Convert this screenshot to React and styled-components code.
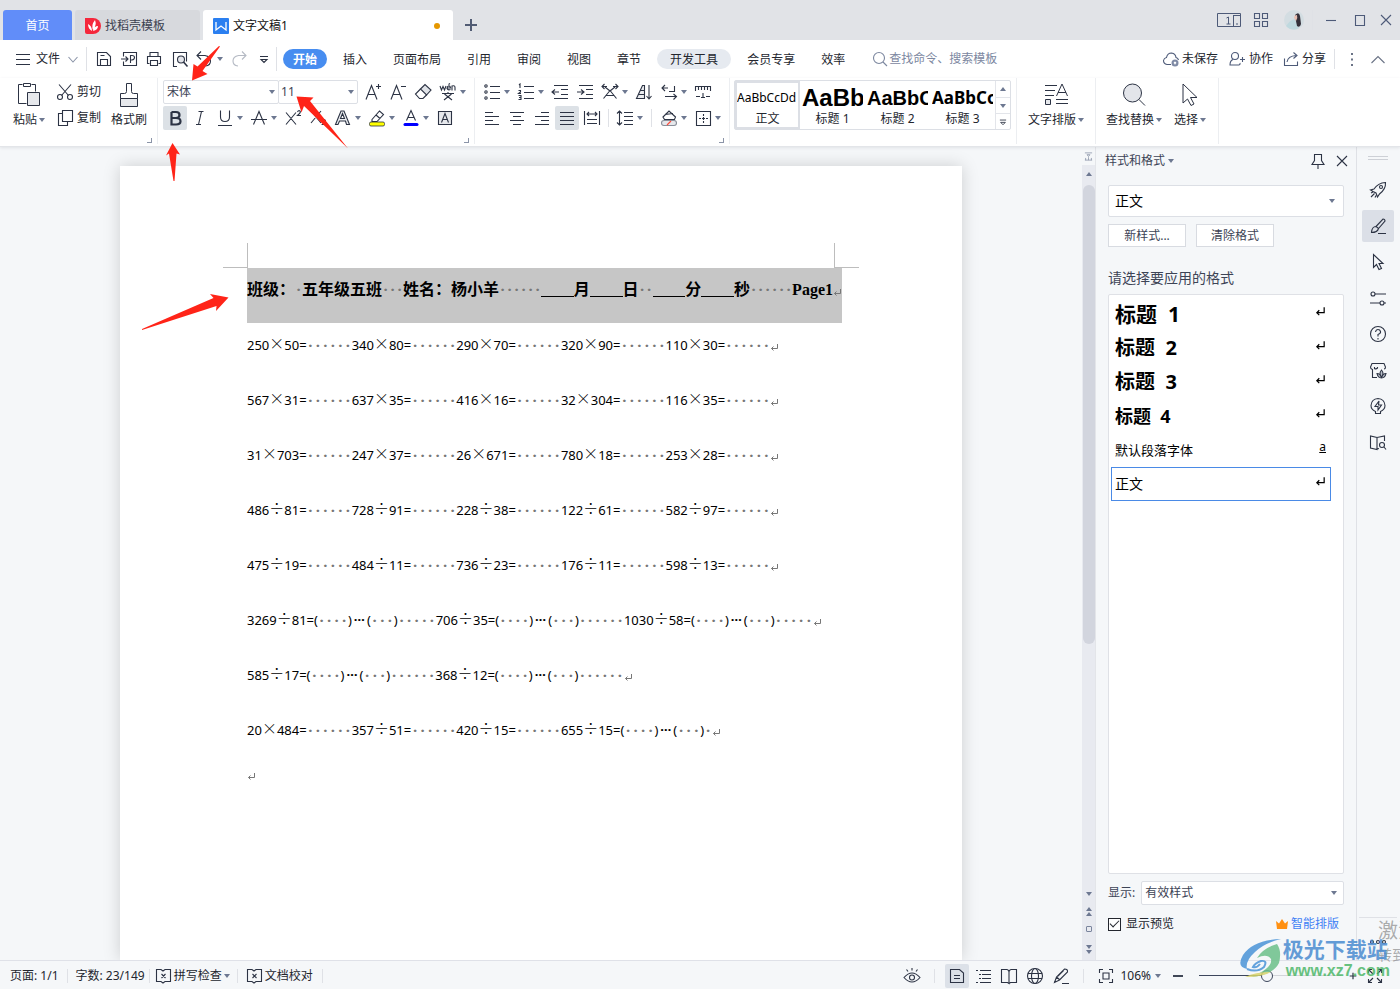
import { useState } from "react";
import styled, { createGlobalStyle } from "styled-components";

const GlobalStyle = createGlobalStyle`
  * {
    box-sizing: border-box;
  }
  body {
    margin: 0;
    font-family: "Noto Sans", "Noto Sans CJK SC", sans-serif;
    font-size: 12px;
    line-height: 16px;
    color: #23262e;
    overflow: hidden;
  }
  button,
  input,
  select {
    font: inherit;
    color: inherit;
    margin: 0;
    padding: 0;
    border: none;
    background: none;
    outline: none;
  }
  h2, h5, p {
    margin: 0;
    font-size: inherit;
    font-weight: inherit;
  }
`;

/* ---------- icons ---------- */

const glyphs = {
  plus: <path d="M9 3v12M3 9h12" strokeWidth="2" />,
  zoomIn: <path d="M9 4v10M4 9h10" strokeWidth="1.8" />,
  zoomOut: <path d="M4 9h10" strokeWidth="1.8" />,
  windowMin: <path d="M4 9.5h10" />,
  windowMax: <path d="M4.5 4.5h9v10h-9z" />,
  close: <path d="M4 4l10 10M14 4L4 14" />,
  grid: <path d="M2.5 2.5h5v5h-5zM10.5 2.5h5v5h-5zM2.5 10.5h5v5h-5zM10.5 10.5h5v5h-5z" />,
  menu: <path d="M2 4.5h14M2 9.5h14M2 14.5h14" />,
  chevronDown: <path d="M4.5 7l4.5 5 4.5-5" />,
  chevronUp: <path d="M2.5 13L9 6.5l6.5 6.5" />,
  save: <path d="M2.5 2.5h9l4 4v9h-13zM5.5 15.5v-6h7v6M5.5 5.5h4" />,
  exportFile: (
    <path d="M3.5 6.5v-4h13v13h-13v-4M1 9h7M5.5 6.5L8 9l-2.5 2.5M10.5 13V5.500h1.5q2.500 0 2.500 2t-2.500 2.500h-1.500" />
  ),
  print: <path d="M5 6.5v-4h8v4M4.500 13.500h-2v-7h13v7h-2M5.500 10.500h7v5h-7z" />,
  preview: (
    <>
      <path d="M6 16.500H2.500v-14h13v9" />
      <circle cx="10" cy="9.500" r="3.500" fill="#e3e5ea" />
      <path d="M12.500 12l4 4.500" strokeWidth="1.600" />
    </>
  ),
  undo: <path d="M7 1.500L3 5.500l4 4M3 5.500h8q5.500 1 5.500 5.500t-5 5" />,
  redo: <path d="M12 1.500l4 4-4 4M16 5.500H8.500Q3 6.500 3 11t5 5" />,
  more: <path d="M5 6.500h8M6 9.500h6l-3 3z" />,
  search: (
    <>
      <circle cx="8" cy="8" r="5.500" />
      <path d="M12 12l4 4" />
    </>
  ),
  cloud: (
    <>
      <path d="M9 14.500H5Q1.500 14 1.500 10.500 2 8 4.500 7.500 5.500 3 9.500 3q4 .5 4.500 4.500 2 .5 2.500 2.500" />
      <circle cx="13" cy="13" r="3.500" fill="#7f8aa5" stroke="none" />
      <path d="M12 12l2 2m0-2l-2 2" stroke="#fff" />
    </>
  ),
  collab: (
    <>
      <circle cx="7" cy="6" r="3.500" />
      <path d="M5 9.500q-3 1-3 5.500h9q1.500-.5 1-2M12 9.500h5M14.500 7v5" />
    </>
  ),
  share: <path d="M2.500 8.500v7h13v-4M5 12q1-6 9-6.500M11.500 2.500l3.500 3-3.500 3" />,
  dotsV: <path d="M9 4h0M9 9.500h0M9 15h0" strokeWidth="2" strokeLinecap="square" />,
  dotsH: (
    <>
      <circle cx="3" cy="9" r="1.500" />
      <circle cx="9" cy="9" r="1.500" />
      <circle cx="15" cy="9" r="1.500" />
    </>
  ),
  cut: (
    <>
      <path d="M3 1.500l9.500 11M15 1.500l-9.500 11" />
      <circle cx="4" cy="14" r="2.500" />
      <circle cx="14" cy="14" r="2.500" />
    </>
  ),
  copy: <path d="M6.500 1.500h10v11h-10zM6.500 4.500h-4v12h9v-4" />,
  growFont: <path d="M2 16.500L7.500 2.500l5.500 14M4 11.500h7M12 3.500h5M14.500 1v5" />,
  shrinkFont: <path d="M2 16.500L7.500 2.500l5.500 14M4 11.500h7M12 3.500h5" />,
  eraser: (
    <>
      <path d="M6.500 6L11 1.500l6 5.500-4.500 5z" fill="#e0e3e8" />
      <path d="M6.500 6L1.500 11l4 4.500h3.500l4-4" />
    </>
  ),
  pinyin: (
    <>
      <path d="M1 3l1.500 4L4 3.500 5.500 7 7 3M8 5h3.500Q11 2.500 9.500 3 8 3.500 8 5.500q1 2 3.500 1M9.500 1.500l1.500-1M13 7.500V3q3-1 3 1.500v3" />
      <path d="M3 10.500h12M9 9v1.500M5.500 11l7.500 6M12.500 11L5 17" />
    </>
  ),
  bold: (
    <path
      d="M5.500 3h4.500q3.500 0 3.500 3T10 9H5.500M5.500 9H10q4.500 0 4.500 3.200T10 15.500H5.500V3"
      strokeWidth="2.200"
    />
  ),
  italic: <path d="M7.500 2.500h5M5 15.500h5M10.500 2.500L7.500 15.500" />,
  underline: <path d="M4.500 1.500V8q0 4.500 4.500 4.500T13.500 8V1.500M2 16.500h14" />,
  strike: <path d="M3.500 15.500L9 2.500l5.500 13M1 10.500h16" />,
  superscript: <path d="M2 3.500l10 12M12 3.500L2 15.500M13.500 3q1-2 2.500-1t-2.500 4.500H17" />,
  subscript: <path d="M2 2l10 12M12 2L2 14M13.500 12q1-2 2.500-1t-2.500 4.500H17" />,
  outlineA: (
    <path d="M1.500 15.500L7 2h3l5.500 13.500h-3L11.500 12H5.500l-1.500 3.500zM6.500 9.500h4L8.500 4.500z" fill="#eceef1" />
  ),
  highlight: (
    <>
      <path d="M4 10.500l7.500-8.500 4 3.500-6.500 7H4zM8 6l4 3.500" />
      <rect x="1.500" y="13" width="15" height="4" rx="1.500" fill="#ffff00" strokeWidth=".8" />
    </>
  ),
  fontColor: (
    <>
      <path d="M4.500 11.500L9 1.500l4.500 10M6 8.500h6" />
      <path d="M3 15.500h12" stroke="#0000ff" strokeWidth="3" strokeLinecap="round" />
    </>
  ),
  shadeA: (
    <>
      <path d="M2.500 2.500h13v13h-13z" fill="#e6e8ec" />
      <path d="M5.500 13.500L9 4.500l3.500 9M6.500 10.500h5" />
    </>
  ),
  bullets: (
    <>
      <circle cx="3" cy="3" r="1.200" />
      <circle cx="3" cy="9" r="1.200" />
      <circle cx="3" cy="15" r="1.200" />
      <path d="M7 3.500h10M7 9.500h10M7 15.500h10" />
    </>
  ),
  numbers: (
    <path d="M2 2l1-1v4M1.500 7.500h2v1.500l-2 1.500h2.500M1.500 12.500h2.500v4H1.500M2 14.500h2M7 3.500h10M7 9.500h10M7 15.500h10" />
  ),
  outdent: <path d="M3 2.500h14M10 6.500h7M10 11.500h7M3 15.500h14M1 9h7M4 6.500L1 9l3 2.500" />,
  indent: <path d="M3 2.500h14M10 6.500h7M10 11.500h7M3 15.500h14M1 9h7M5 6.500L8 9l-3 2.500" />,
  scaleText: (
    <path d="M2.500 15.500L9 7.500l6.500 8M5 12.500h8M1 3.500h5M3.500 1L1 3.500 3.500 6M17 3.500h-5M14.500 1L17 3.500 14.500 6M4 4l5 4M14 4L9 8" />
  ),
  sort: (
    <>
      <path d="M1.500 15.500L7.500 2.500h2v13zM3.500 11.500h6M5.500 7.500h4" fill="#eceef1" />
      <path d="M14 2v13.500M11.500 13l2.500 3 2.500-3" />
    </>
  ),
  returnTab: <path d="M5 2L2 5l3 3M2 5h6M14.500 3v5.500H9M5 13.500h11M13.500 11l3 2.500-3 3" />,
  ruler: <path d="M1.500 8V3.500h15V8M4.500 4v3M7.500 4v3M10.500 4v3M13.500 4v3M2 13.500h4M12 13.500h4M9 10v5M7 14.500h4" />,
  alignLeft: <path d="M2 3.500h8M2 7.500h14M2 11.500h8M2 15.500h14" />,
  alignCenter: <path d="M2 3.500h14M5 7.500h8M2 11.500h14M5 15.500h8" />,
  alignRight: <path d="M8 3.500h8M2 7.500h14M8 11.500h8M2 15.500h14" />,
  justify: <path d="M2 3.500h14M2 7.500h14M2 11.500h14M2 15.500h14" />,
  distribute: <path d="M1.500 2v14M16.500 2v14M4 10.500h10M4 14.500h10M4 5h10M6 3L4 5l2 2M12 3l2 2-2 2" />,
  lineHeight: (
    <path d="M3.500 2v14M1 4.500L3.500 2 6 4.500M1 13.500L3.500 16 6 13.500M8 3.500h9M8 7.500h9M8 11.500h9M8 15.500h9" />
  ),
  bucket: (
    <>
      <path d="M3 8l6-6 6.500 6-1 2.500H4.500zM5 5.500l8-1" />
      <rect x="1.500" y="11.500" width="15" height="5" rx="2.500" fill="#e6e8ec" stroke="#8a8f9a" />
      <path d="M7 16l4-4" stroke="#ff4b3a" />
    </>
  ),
  borders: (
    <path d="M2.500 2.500h14v14h-14zM9.500 5v2M9.500 8v3M9.500 12v2M5 9.500h2M12 9.500h2M8 9.500h3" />
  ),
  pin: <path d="M5.500 2.500h7v6l2.500 4H3l2.500-4zM9 13v4" />,
  rocket: (
    <>
      <path d="M5 8q4-6 11.500-6.500Q17 8 10.500 13l-2 3-1.500-4-3-1.500-2.500-1.500zM2 12l2-1M2 16l3.500-3.500M6 16.500l1-2" />
      <circle cx="12" cy="6" r="1.500" />
    </>
  ),
  brush: <path d="M7 9.500l7-7.500q2 0 2 2l-6.500 7.500zM7 9.500q-4 0-4.500 6 6 0 7-4M9 16.500h8" />,
  cursor: <path d="M4.500 1.500v13l3-3 2.500 5 2.500-1-2.500-5h4z" />,
  sliders: (
    <>
      <circle cx="4" cy="5" r="2" />
      <circle cx="13" cy="14" r="2" />
      <path d="M6 5h11M1 14h10M15 14h2" />
    </>
  ),
  help: (
    <>
      <circle cx="9" cy="9" r="7.500" />
      <path d="M6.500 7q.5-2.500 2.500-2.500t2.500 2T9 9.500v2M9 13v1.500" />
    </>
  ),
  shop: (
    <>
      <path d="M8 16.500H3.500v-8Q1.500 8 1.500 6l1.500-3.500h12L16.500 6q0 2-1.500 2M5.500 6v1.500q1.500 1 3-.5V6" />
      <path d="M8 12.500q3 0 4.500 3.500Q14 12.500 17 12.500q-1 4.500-4.500 4.500T8 12.500z" fill="#b9bfca" />
      <path d="M12.500 16q-3-3.500 0-7 3 3.500 0 7z" fill="#b9bfca" />
    </>
  ),
  bulb: (
    <path d="M6.500 16.500h5v-2q4.500-2 4.500-6-.5-6.500-7-7-6.500.5-7 7 0 4 4.500 6zM10 4L6 9.500h3V13l3.500-5H9.500z" />
  ),
  bookSearch: (
    <>
      <path d="M8 4.500v12L1.500 15V3l6.500 1.500L15.500 3v5M8 16l2-.5" />
      <circle cx="13" cy="12" r="2.500" />
      <path d="M15 14l2 2.500" />
    </>
  ),
  spell: (
    <path d="M7 2.500H2.500v12H7l2 1.500 2-1.500h5.500v-12H11L9 4zM7.500 7l4 4M11.500 7l-4 4" />
  ),
  eye: (
    <>
      <path d="M1 10.500q8-9 16 0-8 9-16 0zM9 1v2.500M3.500 2.500l1.500 2M14.500 2.500l-1.500 2" />
      <circle cx="9" cy="10.500" r="2.500" />
    </>
  ),
  page: <path d="M2.500 2.500h9l4 3.500v9.500h-13zM6 8.500h6M6 11.500h6" />,
  outline: <path d="M2 3.500h2M6 3.500h11M5 7.500h2M8 7.500h9M5 11.500h2M8 11.500h9M2 15.500h2M6 15.500h11" />,
  book: <path d="M9 5v11.500L7.500 15.500h-6v-13h5.500q2 .5 2 2.500 0-2 2-2.500h5.500v13h-6L9 16.500" />,
  globe: (
    <>
      <circle cx="9" cy="9" r="7.500" />
      <ellipse cx="9" cy="9" rx="3.500" ry="7.500" />
      <path d="M2 6.500h14M2 11.500h14" />
    </>
  ),
  pen: <path d="M2.500 15.500l2-5.500 8-8q3.500 0 3 3l-8 8zM4.500 10l3.500 3M10 16.500h7M6 9l5.500-5.500" />,
  fit: <path d="M2.500 6V2.500H6M12 2.500h3.500V6M15.500 12v3.500H12M6 15.500H2.500V12M6 6h6v6H6z" />,
  fullscreen: (
    <path d="M2.500 6V2.500H6M12 2.500h3.500V6M15.500 12v3.500H12M6 15.500H2.500V12M3 3l4 4M15 3l-4 4M15 15l-4-4M3 15l4-4" />
  ),
  collapsePanel: <path d="M4 4h10M7 6.500h4l-2 2.500zM4 14h10M9 10v4M5 11v3M13 11v3" />,
};

const Icon = ({ name, size = 18, color = "#2c3344" }) => (
  <svg
    width={size}
    height={size}
    viewBox="0 0 18 18"
    fill="none"
    stroke={color}
    strokeWidth="1.1"
    aria-hidden="true"
  >
    {glyphs[name]}
  </svg>
);

const Caret = ({ up }) => (
  <svg width="6" height="4" viewBox="0 0 6 4" aria-hidden="true">
    <path d={up ? "M0 4L3 0l3 4z" : "M0 0h6L3 4z"} fill="#6d7891" />
  </svg>
);

const ReturnMark = ({ color = "#777", size = 9 }) => (
  <svg width={size} height={size} viewBox="0 0 9 9" fill="none" stroke={color} aria-hidden="true">
    <path d="M7.5 1v4.500H1.500M3.500 3.500l-2 2 2 2" />
  </svg>
);

/* ---------- shell ---------- */

const Shell = styled.div`
  position: relative;
  height: 100vh;
  display: flex;
  flex-direction: column;
  overflow: hidden;
  background: #f5f7f9;
`;

const Divider = styled.span`
  width: 1px;
  height: ${({ $h }) => $h}px;
  margin: 0 ${({ $m = 0 }) => $m}px;
  background: #dfe1e6;
  flex: none;
`;

/* ---------- title bar ---------- */

const TitleBar = styled.header`
  flex: none;
  height: 40px;
  display: flex;
  align-items: flex-end;
  gap: 3px;
  padding-left: 3px;
  background: #e1e3e7;
`;

const tabColors = {
  home: ["#618df9", "#ffffff"],
  idle: ["#d7d9dd", "#3c4150"],
  open: ["#ffffff", "#111111"],
};

const Tab = styled.button`
  height: 30px;
  width: ${({ $w }) => $w}px;
  display: flex;
  align-items: center;
  justify-content: ${({ $kind }) => ($kind === "home" ? "center" : "flex-start")};
  gap: 4px;
  padding: 2px ${({ $kind }) => ($kind === "home" ? 0 : 10)}px 0;
  border-radius: 3px 3px 0 0;
  background: ${({ $kind }) => tabColors[$kind][0]};
  color: ${({ $kind }) => tabColors[$kind][1]};
`;

const UnsavedDot = styled.span`
  width: 6px;
  height: 6px;
  margin-left: auto;
  margin-right: 3px;
  border-radius: 50%;
  background: #e59700;
`;

const IconButton = styled.button`
  width: ${({ $w = 24 }) => $w}px;
  height: 24px;
  flex: none;
  display: inline-flex;
  align-items: center;
  justify-content: center;
  border-radius: 2px;
  background: ${({ $active }) => ($active ? "#dce1e8" : "transparent")};
`;

const NewTab = styled(IconButton)`
  height: 30px;
  width: 30px;
`;

const WindowControls = styled.div`
  height: 40px;
  margin-left: auto;
  display: flex;
  align-items: center;
`;

/* ---------- menu row ---------- */

const MenuRow = styled.nav`
  flex: none;
  height: 38px;
  display: flex;
  align-items: center;
  padding-left: 14px;
  background: #fff;
`;

const FileButton = styled.button`
  height: 24px;
  width: 72px;
  display: flex;
  align-items: center;
  gap: 4px;
`;

const MenuItem = styled.button`
  height: 20px;
  flex: none;
  padding: 1px ${({ $tone }) => ($tone === "current" ? 10 : 13)}px 0;
  margin: 0 ${({ $tone }) => ($tone ? 3 : 0)}px;
  border-radius: 10px;
  font-weight: ${({ $tone }) => ($tone === "current" ? 700 : 400)};
  color: ${({ $tone }) => ($tone === "current" ? "#fff" : "#23262e")};
  background: ${({ $tone }) =>
    $tone === "current" ? "#478df0" : $tone === "hinted" ? "#e6eaf0" : "transparent"};
`;

const SearchBox = styled.label`
  display: flex;
  align-items: center;
  margin-left: 13px;
  color: #7c879f;
  input {
    width: 120px;
  }
  input::placeholder {
    color: #7c879f;
    opacity: 1;
  }
`;

const AccountActions = styled.div`
  margin-left: auto;
  display: flex;
  align-items: center;
  padding-right: 5px;
`;

const TextButton = styled.button`
  height: 24px;
  display: inline-flex;
  align-items: center;
  gap: ${({ $gap = 3 }) => $gap}px;
  margin-left: ${({ $ml = 0 }) => $ml}px;
`;

/* ---------- ribbon ---------- */

const Ribbon = styled.section`
  flex: none;
  height: 69px;
  display: flex;
  background: #fff;
  border-bottom: 1px solid #e3e5e9;
  box-shadow: 0 1px 3px rgba(40, 50, 70, 0.1);
  z-index: 1;
`;

const Group = styled.div`
  position: relative;
  height: 66px;
  flex: none;
  display: flex;
  padding: 2px ${({ $pr = 5 }) => $pr}px 0 ${({ $pl = 5 }) => $pl}px;
  border-right: 1px solid #eceef1;
`;

const Launcher = styled.span`
  position: absolute;
  right: 5px;
  bottom: 1px;
  width: 5px;
  height: 5px;
  border-right: 1px solid #8b94a8;
  border-bottom: 1px solid #8b94a8;
`;

const ToolRows = styled.div`
  display: flex;
  flex-direction: column;
  gap: 2px;
`;

const ToolRow = styled.div`
  height: 24px;
  display: flex;
  align-items: center;
  gap: 1px;
`;

const ToolButton = styled.button`
  width: ${({ $menu }) => ($menu ? 33 : 24)}px;
  height: 24px;
  flex: none;
  display: flex;
  align-items: center;
  padding-left: 3px;
  gap: ${({ $menu }) => ($menu ? 3 : 0)}px;
  border-radius: 2px;
  background: ${({ $active }) => ($active ? "#dce1e6" : "transparent")};
`;

const BigButton = styled.button`
  width: ${({ $w }) => $w}px;
  height: 50px;
  display: flex;
  flex-direction: column;
  align-items: center;
  gap: 4px;
  padding-top: 2px;
  svg {
    flex: none;
  }
  span {
    display: flex;
    align-items: center;
    gap: 2px;
    white-space: nowrap;
  }
`;

const Combo = styled.div`
  display: grid;
  align-items: center;
  width: ${({ $w }) => $w};
  height: ${({ $h = 24 }) => $h}px;
  border: 1px solid #dcdfe5;
  border-radius: 2px;
  background: #fff;
  font-size: ${({ $size = 12 }) => $size}px;
  color: ${({ $size }) => ($size ? "#000" : "#3c4355")};
  select {
    grid-area: 1 / 1;
    width: 100%;
    height: 100%;
    padding-left: ${({ $pl = 3 }) => $pl}px;
    appearance: none;
  }
  svg {
    grid-area: 1 / 1;
    justify-self: end;
    margin-right: ${({ $mr = 3 }) => $mr}px;
    pointer-events: none;
  }
`;

const FontCombos = styled.div`
  display: flex;
  margin-right: 2px;
  ${Combo} + ${Combo} {
    margin-left: -1px;
  }
`;

const Gallery = styled.div`
  height: 50px;
  display: flex;
  border: 1px solid #dcdfe5;
  border-radius: 2px;
`;

const StyleCard = styled.button`
  width: 65px;
  height: 48px;
  overflow: hidden;
  border: ${({ $active }) => ($active ? "2px solid #dcdfe5" : "2px solid transparent")};
  white-space: nowrap;
  .sample {
    display: block;
    height: 28px;
    line-height: 30px;
    overflow: hidden;
    text-align: left;
    color: #000;
    font-family: ${({ $font }) => $font};
    font-size: ${({ $size }) => $size}px;
    font-weight: ${({ $size }) => ($size > 12 ? 700 : 400)};
  }
`;

const GalleryScroll = styled.div`
  width: 15px;
  display: grid;
  grid-template-rows: 1fr 1fr 1fr;
  border-left: 1px solid #e3e5ea;
  button {
    display: grid;
    place-items: center;
  }
  button + button {
    border-top: 1px solid #e3e5ea;
  }
`;

/* ---------- document ---------- */

const Workspace = styled.main`
  flex: 1;
  min-height: 0;
  display: flex;
`;

const Canvas = styled.div`
  flex: 1;
  min-width: 0;
  display: flex;
  justify-content: center;
  padding-top: 19px;
  overflow: hidden;
`;

const Paper = styled.article`
  width: 842px;
  padding-top: 77px;
  background: #fff;
  box-shadow: 0 0 16px rgba(0, 0, 0, 0.17);
`;

const CropMarks = styled.div`
  display: flex;
  justify-content: space-between;
  padding: 0 103px;
  height: 25px;
  span {
    width: 25px;
    border-bottom: 1px solid #bdbdbd;
  }
  span:first-child {
    border-right: 1px solid #bdbdbd;
  }
  span:last-child {
    border-left: 1px solid #bdbdbd;
  }
`;

const Line = styled.p`
  display: flex;
  height: 55px;
  margin: 0 120px 0 127px;
  font-size: 13px;
  line-height: 45px;
  white-space: pre;
  color: #000;
  svg {
    flex: none;
    margin-top: 20px;
  }
`;

const HeadLine = styled(Line)`
  background: #c6c6c6;
  font-family: "Liberation Serif", "Noto Sans CJK SC", serif;
  font-size: 16px;
  font-weight: 700;
  line-height: 43px;
`;

const LastLine = styled(Line)`
  height: 26px;
  svg {
    margin-top: 9px;
  }
`;

const Op = styled.span`
  width: 15px;
  font-family: "Noto Sans CJK SC", sans-serif;
  font-size: 15px;
  font-weight: 300;
  line-height: 40px;
  text-align: center;
`;

const Ellipsis = styled.span`
  width: 15px;
  text-align: center;
  font-weight: 700;
  line-height: 36px;
`;

const Blank = styled.span`
  width: 33px;
  height: 1px;
  margin-top: 28px;
  background: #000;
`;

const PageWord = styled.span`
  width: 41px;
`;

const Dots = styled.span`
  display: grid;
  grid-auto-flow: column;
  grid-auto-columns: 1fr;
  flex: none;
  width: ${({ $w }) => $w}px;
  text-align: center;
  font-family: "Noto Sans", sans-serif;
  font-weight: 700;
  font-size: 15px;
  color: #777;
`;

const SpaceDots = ({ count, step }) => (
  <Dots $w={Math.round(count * step)}>
    {Array.from({ length: count }, (_, i) => (
      <span key={i}>·</span>
    ))}
  </Dots>
);

const problems = [
  "250×50=······340×80=······290×70=······320×90=······110×30=······",
  "567×31=······637×35=······416×16=······32×304=······116×35=······",
  "31×703=······247×37=······26×671=······780×18=······253×28=······",
  "486÷81=······728÷91=······228÷38=······122÷61=······582÷97=······",
  "475÷19=······484÷11=······736÷23=······176÷11=······598÷13=······",
  "3269÷81=(····)…(···)·····706÷35=(····)…(···)······1030÷58=(····)…(···)·····",
  "585÷17=(····)…(···)······368÷12=(····)…(···)······",
  "20×484=······357÷51=······420÷15=······655÷15=(····)…(···)·",
];

const heading = "班级：·五年级五班···姓名：杨小羊······_月_日··_分_秒······Page1";

const renderTokens = (text, step) =>
  text.match(/·+|[×÷…_]|Page1|[^·×÷…_P]+/g).map((token, i) => {
    if (token[0] === "·") return <SpaceDots key={i} count={token.length} step={step} />;
    if (token === "…") return <Ellipsis key={i}>…</Ellipsis>;
    if (token === "_") return <Blank key={i} />;
    if (token === "×" || token === "÷") return <Op key={i}>{token}</Op>;
    if (token === "Page1") return <PageWord key={i}>{token}</PageWord>;
    return <span key={i}>{token}</span>;
  });

const ScrollTrack = styled.div`
  width: 13px;
  flex: none;
  display: flex;
  flex-direction: column;
  align-items: center;
  background: #e8eaf0;
`;

const RulerToggle = styled.button`
  width: 13px;
  height: 18px;
  background: #f5f7f9;
  display: grid;
  place-items: center;
`;

const ScrollButton = styled.button`
  width: 13px;
  height: ${({ $h = 18 }) => $h}px;
  display: flex;
  flex-direction: column;
  align-items: center;
  justify-content: center;
  gap: 1px;
`;

const ScrollThumb = styled.div`
  width: 12px;
  height: 459px;
  margin: 2px 0 auto;
  border-radius: 6px;
  background: #d2d5de;
`;

const BrowseDot = styled.span`
  width: 6px;
  height: 6px;
  border: 1px solid #7a859d;
  border-radius: 1px;
`;

/* ---------- style pane ---------- */

const Pane = styled.aside`
  width: 262px;
  flex: none;
  display: flex;
  flex-direction: column;
  padding: 0 12px 28px;
  border-left: 1px solid #e3e5e9;
  border-right: 1px solid #dfe1e6;
  color: #3d4456;
`;

const PaneHead = styled.div`
  height: 38px;
  display: flex;
  align-items: flex-start;
  padding-top: 2px;
  margin: 0 -10px 0 -3px;
  h2 {
    margin-right: auto;
  }
  h2,
  button {
    display: flex;
    align-items: center;
    gap: 3px;
    height: 24px;
  }
`;

const PaneButtons = styled.div`
  display: flex;
  gap: 10px;
  margin-top: 7px;
`;

const PaneButton = styled.button`
  width: 78px;
  height: 23px;
  background: #fff;
  border: 1px solid #d8dbe1;
`;

const PaneLabel = styled.h5`
  margin: 20px 0 6px;
  font-size: 14px;
  line-height: 21px;
`;

const StyleList = styled.ul`
  flex: 1;
  margin: 0;
  padding: 2px 12px 0 2px;
  list-style: none;
  background: #fff;
  border: 1px solid #dfe1e6;
  border-radius: 2px;
`;

const StyleItem = styled.li`
  height: 34px;
  display: flex;
  align-items: center;
  justify-content: space-between;
  padding: 0 4px 0 3px;
  border: 1px solid ${({ $selected }) => ($selected ? "#4a8ae6" : "transparent")};
  color: #000;
  font-size: ${({ $size }) => $size}px;
  font-weight: ${({ $size }) => ($size > 15 ? 700 : 400)};
  white-space: pre;
  line-height: 30px;
  u,
  svg {
    font-size: 12px;
    line-height: 16px;
    margin-bottom: 6px;
  }
`;

const ShowRow = styled.label`
  display: flex;
  align-items: center;
  gap: 6px;
  margin-top: 7px;
  white-space: nowrap;
`;

const OptionRow = styled.div`
  display: flex;
  align-items: center;
  justify-content: space-between;
  padding-right: 5px;
  margin-top: 11px;
  label {
    display: flex;
    align-items: center;
    gap: 5px;
    color: #23262e;
  }
  a {
    display: flex;
    align-items: center;
    gap: 3px;
    color: #3f7ff5;
    text-decoration: none;
  }
`;

const CheckBox = styled.input`
  width: 13px;
  height: 13px;
  appearance: none;
  display: grid;
  place-items: center;
  border: 1px solid #23262e;
  background: #fff;
  &:checked::before {
    content: "";
    width: 8px;
    height: 4px;
    margin-bottom: 3px;
    border-left: 1px solid #23262e;
    border-bottom: 1px solid #23262e;
    transform: rotate(-45deg);
  }
`;

const SideStrip = styled.aside`
  width: 43px;
  flex: none;
  display: flex;
  flex-direction: column;
  align-items: center;
  gap: 4px;
  padding: 9px 2px 0 0;
  hr {
    width: 20px;
    height: 4px;
    margin: 0 0 10px;
    border: solid #cdd0d6;
    border-width: 1px 0;
  }
`;

const StripButton = styled.button`
  width: 32px;
  height: 32px;
  flex: none;
  display: grid;
  place-items: center;
  border-radius: 2px;
  background: ${({ $active }) => ($active ? "#dbdfe7" : "transparent")};
`;

const StripFoot = styled.div`
  width: 38px;
  height: 43px;
  margin-top: auto;
  padding-top: 6px;
  display: grid;
  place-items: center;
  border-top: 1px solid #dfe1e6;
`;

/* ---------- status bar ---------- */

const StatusBar = styled.footer`
  flex: none;
  height: 29px;
  display: flex;
  align-items: center;
  padding: 1px 11px 0 10px;
  border-top: 1px solid #dfe1e8;
  white-space: nowrap;
`;

const ViewTools = styled.div`
  margin-left: auto;
  display: flex;
  align-items: center;
  gap: 2px;
`;

const ZoomSlider = styled.input`
  width: 142px;
  height: 14px;
  margin: 0 4px;
  appearance: none;
  background: linear-gradient(90deg, #3c465c 48%, #d2d5da 48%) center / 100% 1px no-repeat;
  &::-webkit-slider-thumb {
    appearance: none;
    width: 12px;
    height: 12px;
    border: 1px solid #3c465c;
    border-radius: 50%;
    background: #f5f7f9;
  }
`;

/* ---------- overlays ---------- */

const Arrows = styled.svg`
  position: absolute;
  left: 0;
  top: 0;
  z-index: 2;
  pointer-events: none;
`;

const Activation = styled.div`
  position: absolute;
  right: 0;
  bottom: 23px;
  width: 22px;
  overflow: hidden;
  white-space: nowrap;
  color: rgba(120, 120, 120, 0.6);
  font-size: 14px;
  line-height: 22px;
  p:first-child {
    font-size: 20px;
    line-height: 26px;
  }
`;

const Watermark = styled.div`
  position: absolute;
  right: 10px;
  bottom: 5px;
  z-index: 2;
  display: flex;
  opacity: 0.85;
  pointer-events: none;
  p {
    height: 23px;
    font-size: 21px;
    line-height: 23px;
    font-weight: 700;
    color: #4a8bd0;
    white-space: nowrap;
  }
  p + p {
    padding-left: 3px;
    font-family: "Liberation Sans", sans-serif;
    font-size: 16px;
    line-height: 20px;
    font-weight: 700;
    color: #4fb86a;
  }
`;

const menus = [
  ["开始", "current"],
  ["插入"],
  ["页面布局"],
  ["引用"],
  ["审阅"],
  ["视图"],
  ["章节"],
  ["开发工具", "hinted"],
  ["会员专享"],
  ["效率"],
];

// [icon, has a drop-down]
const fontRowTop = [["growFont"], ["shrinkFont"], ["eraser"], ["pinyin", true]];
const fontRowBottom = [
  ["italic"],
  ["underline", true],
  ["strike", true],
  ["superscript"],
  ["subscript"],
  ["outlineA", true],
  ["highlight", true],
  ["fontColor", true],
  ["shadeA"],
];
const paraRowTop = [
  ["bullets", true],
  ["numbers", true],
  ["outdent"],
  ["indent"],
  ["scaleText", true],
  ["sort"],
  ["returnTab", true],
  ["ruler"],
];
const alignments = ["alignLeft", "alignCenter", "alignRight", "justify", "distribute"];

const cards = [
  ["正文", "AaBbCcDd", 12, '"Noto Sans", sans-serif'],
  ["标题 1", "AaBb", 24, '"Liberation Sans", sans-serif'],
  ["标题 2", "AaBbC", 20, '"Liberation Sans", sans-serif'],
  ["标题 3", "AaBbCc", 17, '"Noto Sans", sans-serif'],
];

const paneStyles = [
  ["标题  1", 21],
  ["标题  2", 20],
  ["标题  3", 20],
  ["标题  4", 18],
  ["默认段落字体", 13],
  ["正文", 14],
];

const stripIcons = ["rocket", "brush", "cursor", "sliders", "help", "shop", "bulb", "bookSearch"];

const Tool = ({ name, menu, active, onClick }) => (
  <ToolButton type="button" aria-label={name} $menu={menu} $active={active} onClick={onClick}>
    <Icon name={name} />
    {menu && <Caret />}
  </ToolButton>
);

const TopTabs = () => (
  <TitleBar>
    <Tab $kind="home" $w={69}>首页</Tab>
    <Tab $kind="idle" $w={125}>
      <svg width="16" height="16" viewBox="0 0 16 16" aria-hidden="true">
        <path d="M0 0h8a8 8 0 010 16H2q-2 0-2-2z" fill="#f5283c" />
        <path d="M7 13Q3 11 3 6q4 2 4 7zM8 12Q6 7 10 2q2 5-2 10zM8 13q1-5 5-5 0 4-5 5z" fill="#fff" />
      </svg>
      找稻壳模板
    </Tab>
    <Tab $kind="open" $w={250}>
      <svg width="16" height="16" viewBox="0 0 16 16" aria-hidden="true">
        <rect width="16" height="16" rx="1" fill="#2b7ff0" />
        <path d="M3 4v8l5-4 5 4V4" fill="none" stroke="#fff" strokeWidth="1.3" />
      </svg>
      文字文稿1
      <UnsavedDot />
    </Tab>
    <NewTab aria-label="new tab">
      <Icon name="plus" color="#515c74" />
    </NewTab>
    <WindowControls>
      <IconButton $w={36} aria-label="window layout">
        <svg width="24" height="14" viewBox="0 0 24 14" fill="none" stroke="#4d5a78" aria-hidden="true">
          <path d="M.5.5h23v13H.5zM16.5 2v11M16.5 2.500h7M9.500 5l2-1v7M9.500 11h4M19 11h2" />
        </svg>
      </IconButton>
      <IconButton $w={28} aria-label="apps">
        <Icon name="grid" color="#4d5a78" />
      </IconButton>
      <IconButton $w={37} aria-label="account">
        <svg width="20" height="20" viewBox="0 0 20 20" aria-hidden="true">
          <circle cx="10" cy="10" r="10" fill="#d3dde2" />
          <path d="M2 16q4-6 9-7l4 9q-7 4-13-2z" fill="#bfd9df" />
          <path d="M11 5q4-4 5 1l1 8q-1 4-4 2l-1-5z" fill="#33303a" />
          <path d="M10 8q0-3 3-3 1 3-1 6z" fill="#e7bfb2" />
        </svg>
      </IconButton>
      <Divider $h={20} />
      <IconButton $w={35} aria-label="minimize">
        <Icon name="windowMin" color="#4d5a78" />
      </IconButton>
      <IconButton $w={24} aria-label="maximize">
        <Icon name="windowMax" color="#4d5a78" />
      </IconButton>
      <IconButton $w={28} aria-label="close">
        <Icon name="close" color="#4d5a78" />
      </IconButton>
    </WindowControls>
  </TitleBar>
);

const MenuBar = () => (
  <MenuRow>
    <FileButton>
      <Icon name="menu" />
      文件
      <Icon name="chevronDown" color="#8b94a8" />
    </FileButton>
    <Divider $h={24} />
    <IconButton $w={33} aria-label="save"><Icon name="save" /></IconButton>
    <IconButton $w={18} aria-label="export"><Icon name="exportFile" /></IconButton>
    <IconButton $w={32} aria-label="print"><Icon name="print" /></IconButton>
    <IconButton $w={19} aria-label="preview"><Icon name="preview" /></IconButton>
    <IconButton $w={28} aria-label="undo"><Icon name="undo" /></IconButton>
    <Caret />
    <IconButton $w={32} aria-label="redo"><Icon name="redo" color="#b5bac4" /></IconButton>
    <IconButton $w={18} aria-label="customize"><Icon name="more" /></IconButton>
    <Divider $h={24} $m={3} />
    {menus.map(([label, tone]) => (
      <MenuItem key={label} $tone={tone}>{label}</MenuItem>
    ))}
    <SearchBox>
      <Icon name="search" color="#7c879f" />
      <input placeholder="查找命令、搜索模板" aria-label="查找命令、搜索模板" />
    </SearchBox>
    <AccountActions>
      <TextButton $gap={2}><Icon name="cloud" color="#4d5a78" />未保存</TextButton>
      <TextButton $ml={10}><Icon name="collab" color="#4d5a78" />协作</TextButton>
      <TextButton $ml={9} $gap={2}><Icon name="share" color="#4d5a78" />分享</TextButton>
      <Divider $h={20} $m={8} />
      <IconButton $w={18} aria-label="more"><Icon name="dotsV" color="#6a7386" /></IconButton>
      <IconButton $w={34} aria-label="collapse"><Icon name="chevronUp" color="#6a7386" /></IconButton>
    </AccountActions>
  </MenuRow>
);

const RibbonBar = () => {
  const [bold, setBold] = useState(true);
  const [align, setAlign] = useState("justify");

  return (
    <Ribbon>
      <Group $pl={8} $pr={0}>
        <BigButton $w={42}>
          <svg width="24" height="26" viewBox="0 0 24 26" fill="none" stroke="#2c3344" aria-hidden="true">
            <path d="M5.5 2.500h-4v19h8M14.500 2.500h4v7M6.500 1.500h7v3h-7z" />
            <path d="M10.500 10.500h12v13h-12z" fill="#e6e8ec" />
          </svg>
          <span>粘贴 <Caret /></span>
        </BigButton>
        <ToolRows>
          <TextButton $ml={6}><Icon name="cut" />剪切</TextButton>
          <TextButton $ml={6}><Icon name="copy" />复制</TextButton>
        </ToolRows>
        <BigButton $w={56}>
          <svg width="20" height="26" viewBox="0 0 20 26" fill="none" stroke="#2c3344" aria-hidden="true">
            <path d="M7.500 1.500h5v8q0 2 2 2h4v5h-17v-5h4q2 0 2-2z" />
            <path d="M1.500 16.500h17v8h-17z" fill="#e6e8ec" />
          </svg>
          <span>格式刷</span>
        </BigButton>
        <Launcher />
      </Group>
      <Group>
        <ToolRows>
          <ToolRow>
            <FontCombos>
              <Combo $w="116px">
                <select aria-label="font" defaultValue="宋体"><option>宋体</option></select>
                <Caret />
              </Combo>
              <Combo $w="80px" $pl={2}>
                <select aria-label="font size" defaultValue="11"><option>11</option></select>
                <Caret />
              </Combo>
            </FontCombos>
            {fontRowTop.map(([name, menu]) => <Tool key={name} name={name} menu={menu} />)}
          </ToolRow>
          <ToolRow>
            <Tool name="bold" active={bold} onClick={() => setBold(!bold)} />
            {fontRowBottom.map(([name, menu]) => <Tool key={name} name={name} menu={menu} />)}
          </ToolRow>
        </ToolRows>
        <Launcher />
      </Group>
      <Group>
        <ToolRows>
          <ToolRow>
            {paraRowTop.map(([name, menu]) => <Tool key={name} name={name} menu={menu} />)}
          </ToolRow>
          <ToolRow>
            {alignments.map((name) => (
              <Tool key={name} name={name} active={align === name} onClick={() => setAlign(name)} />
            ))}
            <Divider $h={18} $m={3} />
            <Tool name="lineHeight" menu />
            <Divider $h={18} $m={4} />
            <Tool name="bucket" menu />
            <Tool name="borders" menu />
          </ToolRow>
        </ToolRows>
        <Launcher />
      </Group>
      <Group $pl={4}>
        <Gallery>
          {cards.map(([label, sample, size, font], i) => (
            <StyleCard key={label} $active={i === 0} $size={size} $font={font}>
              <span className="sample">{sample}</span>
              {label}
            </StyleCard>
          ))}
          <GalleryScroll>
            <button aria-label="up"><Caret up /></button>
            <button aria-label="down"><Caret /></button>
            <button aria-label="all styles"><Icon name="more" size={14} /></button>
          </GalleryScroll>
        </Gallery>
      </Group>
      <Group>
        <BigButton $w={68}>
          <svg width="26" height="26" viewBox="0 0 26 26" fill="none" stroke="#2c3344" aria-hidden="true">
            <path d="M2 3.500h12M2 8.500h10M2 13.500h9M13 21.500h12M13 17.500h12M13.500 14L19 2l5.500 12M15 10.500h8" />
            <path d="M2.500 17.500h5v5h-5z" fill="#e6e8ec" />
          </svg>
          <span>文字排版 <Caret /></span>
        </BigButton>
      </Group>
      <Group>
        <BigButton $w={66}>
          <svg width="26" height="26" viewBox="0 0 26 26" fill="none" stroke="#2c3344" aria-hidden="true">
            <circle cx="11.500" cy="11" r="9" fill="#e3e5ea" />
            <path d="M18 17.500l6 6" />
          </svg>
          <span>查找替换 <Caret /></span>
        </BigButton>
        <BigButton $w={46}>
          <svg width="26" height="26" viewBox="0 0 26 26" fill="none" stroke="#2c3344" aria-hidden="true">
            <path d="M6 2v19l4.500-4 3.500 6.500 3-1.500-3.500-6.500H20z" />
          </svg>
          <span>选择 <Caret /></span>
        </BigButton>
      </Group>
    </Ribbon>
  );
};

const DocumentView = () => (
  <>
    <Canvas>
      <Paper>
        <CropMarks>
          <span />
          <span />
        </CropMarks>
        <HeadLine>
          {renderTokens(heading, 7)}
          <ReturnMark />
        </HeadLine>
        {problems.map((line) => (
          <Line key={line}>
            {renderTokens(line, 7.5)}
            <ReturnMark />
          </Line>
        ))}
        <LastLine>
          <ReturnMark />
        </LastLine>
      </Paper>
    </Canvas>
    <ScrollTrack>
      <RulerToggle aria-label="ruler"><Icon name="collapsePanel" size={13} color="#8b94a8" /></RulerToggle>
      <ScrollButton aria-label="scroll up"><Caret up /></ScrollButton>
      <ScrollThumb />
      <ScrollButton aria-label="scroll down" $h={16}><Caret /></ScrollButton>
      <ScrollButton aria-label="previous page"><Caret up /><Caret up /></ScrollButton>
      <ScrollButton aria-label="browse"><BrowseDot /></ScrollButton>
      <ScrollButton aria-label="next page" $h={22}><Caret /><Caret /></ScrollButton>
    </ScrollTrack>
  </>
);

const StylePane = () => {
  const [selected, setSelected] = useState("正文");

  return (
    <Pane>
      <PaneHead>
        <h2>样式和格式 <Caret /></h2>
        <IconButton aria-label="pin"><Icon name="pin" /></IconButton>
        <IconButton aria-label="close pane"><Icon name="close" /></IconButton>
      </PaneHead>
      <Combo $w="100%" $h={32} $size={14} $pl={6} $mr={8}>
        <select aria-label="current style" defaultValue="正文"><option>正文</option></select>
        <Caret />
      </Combo>
      <PaneButtons>
        <PaneButton>新样式...</PaneButton>
        <PaneButton>清除格式</PaneButton>
      </PaneButtons>
      <PaneLabel>请选择要应用的格式</PaneLabel>
      <StyleList>
        {paneStyles.map(([name, size]) => (
          <StyleItem
            key={name}
            $size={size}
            $selected={selected === name}
            onClick={() => setSelected(name)}
          >
            {name}
            {size === 13 ? <u>a</u> : <ReturnMark color="#000" size={11} />}
          </StyleItem>
        ))}
      </StyleList>
      <ShowRow>
        显示:
        <Combo $w="100%" $mr={6}>
          <select defaultValue="有效样式"><option>有效样式</option></select>
          <Caret />
        </Combo>
      </ShowRow>
      <OptionRow>
        <label>
          <CheckBox type="checkbox" defaultChecked />
          显示预览
        </label>
        <a href="#layout">
          <svg width="12" height="10" viewBox="0 0 12 10" aria-hidden="true">
            <path d="M0 2l3 2.500L6 0l3 4.500L12 2l-1 8H1z" fill="#ff9012" />
          </svg>
          智能排版
        </a>
      </OptionRow>
    </Pane>
  );
};

const Status = () => (
  <StatusBar>
    页面: 1/1
    <Divider $h={14} $m={8} />
    <TextButton>字数: 23/149</TextButton>
    <Divider $h={14} $m={4} />
    <TextButton $gap={2}>
      <Icon name="spell" />
      拼写检查 <Caret />
    </TextButton>
    <Divider $h={14} $m={7} />
    <TextButton $gap={2}><Icon name="spell" />文档校对</TextButton>
    <Divider $h={14} $m={9} />
    <ViewTools>
      <IconButton aria-label="eye care"><Icon name="eye" /></IconButton>
      <Divider $h={14} $m={8} />
      <IconButton $active aria-label="page view"><Icon name="page" /></IconButton>
      <IconButton aria-label="outline view"><Icon name="outline" /></IconButton>
      <IconButton aria-label="reading view"><Icon name="book" /></IconButton>
      <IconButton aria-label="web view"><Icon name="globe" /></IconButton>
      <IconButton aria-label="writing mode"><Icon name="pen" /></IconButton>
      <Divider $h={14} $m={8} />
      <IconButton aria-label="fit"><Icon name="fit" /></IconButton>
      <TextButton $gap={4}>106% <Caret /></TextButton>
      <IconButton $w={30} aria-label="zoom out"><Icon name="zoomOut" /></IconButton>
      <ZoomSlider type="range" min="0" max="100" defaultValue="48" aria-label="zoom" />
      <IconButton $w={12} aria-label="zoom in"><Icon name="zoomIn" /></IconButton>
      <IconButton $w={28} aria-label="full screen"><Icon name="fullscreen" /></IconButton>
    </ViewTools>
  </StatusBar>
);

const App = () => (
  <Shell>
    <GlobalStyle />
    <TopTabs />
    <MenuBar />
    <RibbonBar />
    <Workspace>
      <DocumentView />
      <StylePane />
      <SideStrip>
        <hr />
        {stripIcons.map((name) => (
          <StripButton key={name} aria-label={name} $active={name === "brush"}>
            <Icon name={name} />
          </StripButton>
        ))}
        <StripFoot><Icon name="dotsH" /></StripFoot>
      </SideStrip>
    </Workspace>
    <Status />
    <Arrows width="360" height="340" viewBox="0 0 360 340" fill="#ff2418" aria-hidden="true">
      <path d="M192 80.500L193.500 64l4 2.500L219 46l1 .5L202.500 71l5 3z" />
      <path d="M296.500 96.500l17 1-3.500 3.500 38 47.500-44-42.500-2.500 6.500z" />
      <path d="M172.500 143l7.500 11.500-3.500-1L174.500 181h-1L169 153.500l-3 2z" />
      <path d="M228.500 297.500L210 294l3.500 4L142 329v1l74.500-24-.5 5z" />
    </Arrows>
    <Activation aria-hidden="true">
      <p>激活</p>
      <p>转到</p>
    </Activation>
    <Watermark>
      <svg width="44" height="42" viewBox="0 0 44 42" aria-hidden="true">
        <path d="M42 1Q14 2 4 17-3 29 8 31q-2-8 8-17Q25 5 42 1z" fill="#4a94d8" />
        <path d="M38 6q-14 4-20 14 10-5 14 1 2 9-20 18 22-2 28-14Q43 13 38 6z" fill="#6cc08a" />
        <path d="M8 31q10 4 17-2 4-7-3-6-6 2-8 6 4 1 7-3" fill="none" stroke="#4a94d8" strokeWidth="2" />
        <path d="M6 39q10-5 26-5-8 5-26 5z" fill="#d8d36a" />
      </svg>
      <div>
        <p>极光下载站</p>
        <p>www.xz7.com</p>
      </div>
    </Watermark>
  </Shell>
);

export default App;
